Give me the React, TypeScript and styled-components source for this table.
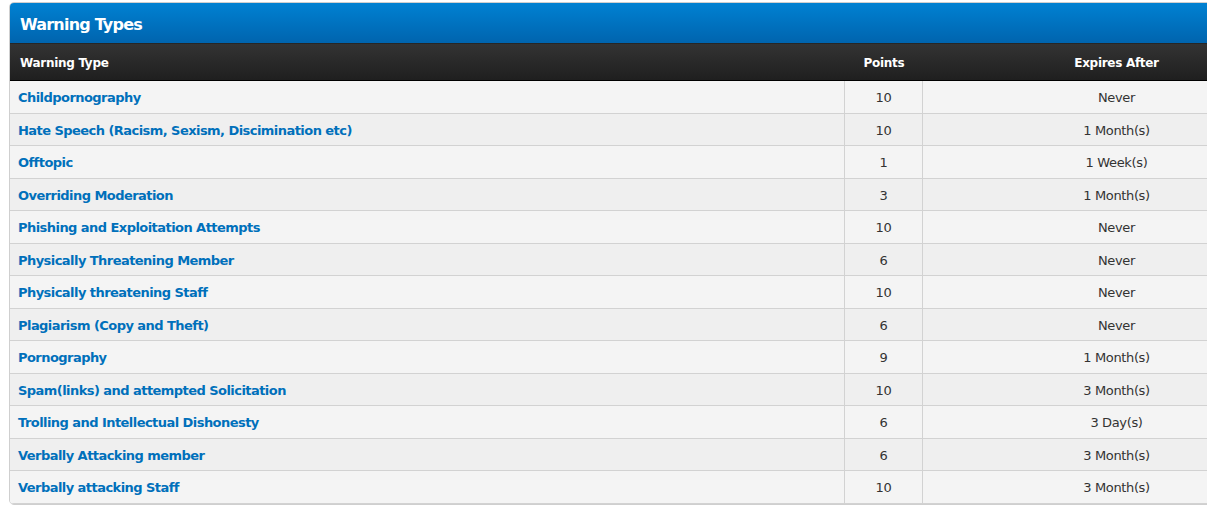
import React from 'react'
import styled, { createGlobalStyle } from 'styled-components'

interface Warning {
  title: string
  points: number
  expires: string
}

const warnings: Warning[] = [
  { title: 'Childpornography', points: 10, expires: 'Never' },
  { title: 'Hate Speech (Racism, Sexism, Discimination etc)', points: 10, expires: '1 Month(s)' },
  { title: 'Offtopic', points: 1, expires: '1 Week(s)' },
  { title: 'Overriding Moderation', points: 3, expires: '1 Month(s)' },
  { title: 'Phishing and Exploitation Attempts', points: 10, expires: 'Never' },
  { title: 'Physically Threatening Member', points: 6, expires: 'Never' },
  { title: 'Physically threatening Staff', points: 10, expires: 'Never' },
  { title: 'Plagiarism (Copy and Theft)', points: 6, expires: 'Never' },
  { title: 'Pornography', points: 9, expires: '1 Month(s)' },
  { title: 'Spam(links) and attempted Solicitation', points: 10, expires: '3 Month(s)' },
  { title: 'Trolling and Intellectual Dishonesty', points: 6, expires: '3 Day(s)' },
  { title: 'Verbally Attacking member', points: 6, expires: '3 Month(s)' },
  { title: 'Verbally attacking Staff', points: 10, expires: '3 Month(s)' },
]

const GlobalStyle = createGlobalStyle`
  body {
    margin: 0;
    background: #fff;
    overflow: hidden;
    font-family: 'DejaVu Sans', Verdana, sans-serif;
  }
`

const Box = styled.div`
  width: 1300px;
  margin: 2px 0 0 9px;
  border: 1px solid #cfcfcf;
  border-radius: 5px;
  overflow: hidden;
  background: #f4f4f4;
`

const Title = styled.h2`
  margin: 0;
  height: 40px;
  display: flex;
  align-items: center;
  padding: 2px 10px 0;
  box-sizing: border-box;
  background: linear-gradient(to bottom, #0081d2, #0064ae);
  color: #fff;
  font-size: 16px;
  font-weight: bold;
  letter-spacing: -0.8px;
`

const Grid = styled.div`
  display: grid;
  grid-template-columns: 835px 78px 1fr;
`

const Head = styled.div<{ $align?: string }>`
  height: 34px;
  display: flex;
  align-items: center;
  justify-content: ${(p) => p.$align || 'flex-start'};
  padding: 2px 10px 0;
  background: linear-gradient(to bottom, #333333, #1f1f1f);
  border-top: 1px solid #262626;
  border-bottom: 1px solid #000;
  color: #fff;
  font-size: 12px;
  font-weight: bold;
  letter-spacing: -0.3px;
`

const Cell = styled.div<{ $alt: boolean; $center?: boolean; $divider?: boolean }>`
  height: 30px;
  display: flex;
  align-items: center;
  justify-content: ${(p) => (p.$center ? 'center' : 'flex-start')};
  padding: 1.5px 8px 0;
  background: ${(p) => (p.$alt ? '#efefef' : '#f4f4f4')};
  border-bottom: 1px solid #d2d2d2;
  border-right: ${(p) => (p.$divider ? '1px solid #d2d2d2' : 'none')};
  color: #333;
  font-size: 13px;
  letter-spacing: -0.35px;
`

const Link = styled.a`
  color: #0070bb;
  font-weight: bold;
  text-decoration: none;
  letter-spacing: -0.55px;
  font-size: 13px;
`

const App = (): JSX.Element => {
  return (
    <>
      <GlobalStyle />
      <Box>
        <Title>Warning Types</Title>
        <Grid>
          <Head>Warning Type</Head>
          <Head $align="center">Points</Head>
          <Head $align="center">Expires After</Head>
          {warnings.map((w, i) => (
            <React.Fragment key={w.title}>
              <Cell $alt={i % 2 === 1} $divider>
                <Link href="#">{w.title}</Link>
              </Cell>
              <Cell $alt={i % 2 === 1} $center $divider>
                {w.points}
              </Cell>
              <Cell $alt={i % 2 === 1} $center>
                {w.expires}
              </Cell>
            </React.Fragment>
          ))}
        </Grid>
      </Box>
    </>
  )
}

export default App
